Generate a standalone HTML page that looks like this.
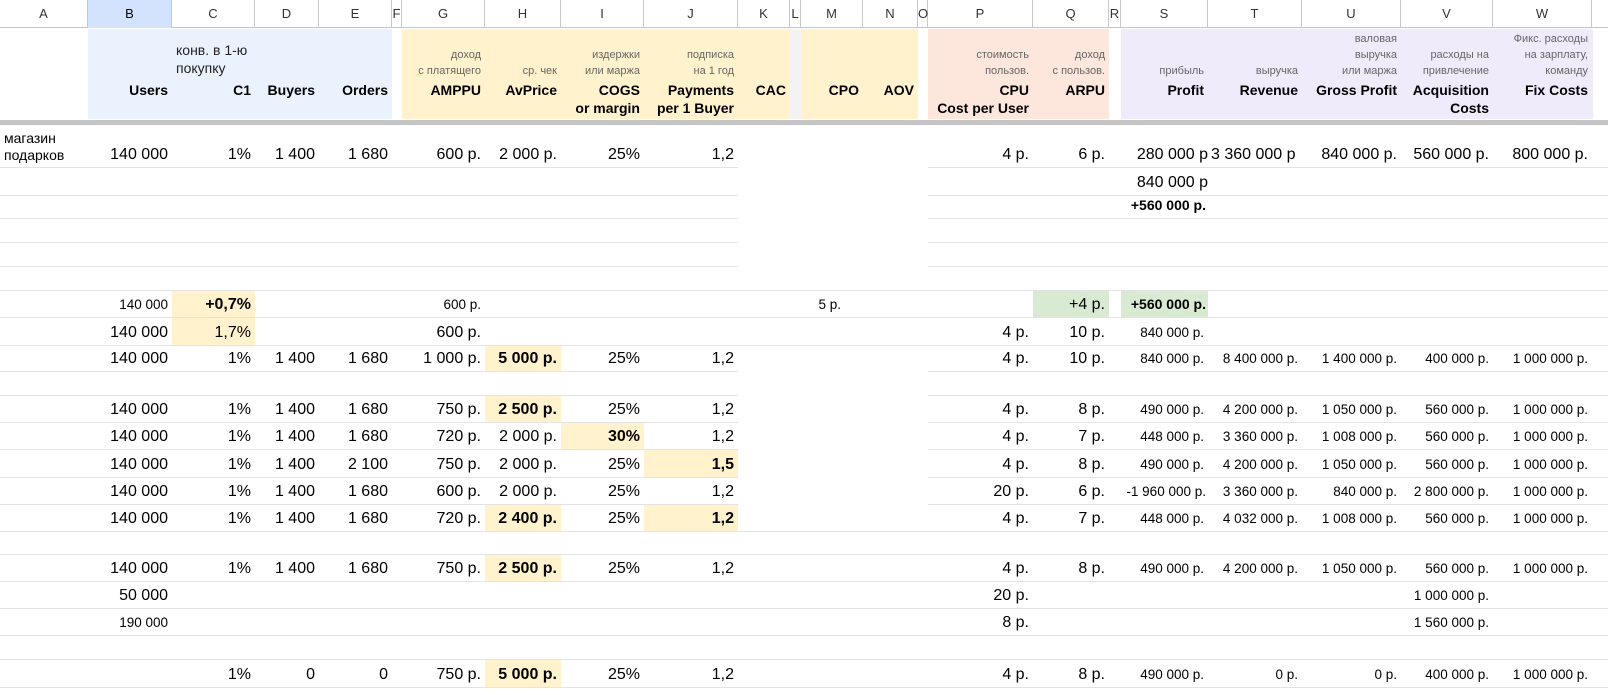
<!DOCTYPE html>
<html><head><meta charset="utf-8"><style>
*{margin:0;padding:0;box-sizing:border-box}
body{width:1608px;height:695px;overflow:hidden;background:#fff;font-family:"Liberation Sans","DejaVu Sans",sans-serif;color:#000;position:relative}
#hdr{position:absolute;left:0;top:0;height:28px;width:1608px;border-bottom:1px solid #c4c4c4;background:#fff}
#hdr div{position:absolute;top:0;height:28px;border-right:1px solid #c9c9c9;text-align:center;line-height:28px;font-size:13px;color:#333}
#band{position:absolute;left:0;top:28px;height:92px;width:1608px}
#band div.c{position:absolute;top:1px;height:90px}
#bar{position:absolute;left:0;top:120px;height:5px;width:1608px;background:#c4c4c4}
.h{position:absolute;text-align:right;font-size:11px;color:#666;white-space:nowrap;line-height:16px}
.hb{position:absolute;text-align:right;font-size:14px;font-weight:bold;white-space:nowrap;line-height:18px}
table{position:absolute;left:0;top:125px;border-collapse:collapse;table-layout:fixed;width:1608px}
td{border-bottom:1px solid #e3e3e3;padding:0 4px 3px 2px;text-align:right;vertical-align:bottom;font-size:16px;white-space:nowrap;overflow:hidden;line-height:19px}
td.n{border-bottom:none}
.b{font-weight:bold}
.s{font-size:13.5px}
.y{background:#fff2cc}
.g{background:#d9ead3}
</style></head><body>
<div id="hdr">
<div style="left:0;width:88px">A</div>
<div style="left:88px;width:84px;background:#d3e3fd;color:#000">B</div>
<div style="left:172px;width:83px">C</div>
<div style="left:255px;width:64px">D</div>
<div style="left:319px;width:73px">E</div>
<div style="left:392px;width:10px">F</div>
<div style="left:402px;width:83px">G</div>
<div style="left:485px;width:76px">H</div>
<div style="left:561px;width:83px">I</div>
<div style="left:644px;width:94px">J</div>
<div style="left:738px;width:52px">K</div>
<div style="left:790px;width:11px">L</div>
<div style="left:801px;width:62px">M</div>
<div style="left:863px;width:55px">N</div>
<div style="left:918px;width:10px">O</div>
<div style="left:928px;width:105px">P</div>
<div style="left:1033px;width:76px">Q</div>
<div style="left:1109px;width:12px">R</div>
<div style="left:1121px;width:87px">S</div>
<div style="left:1208px;width:94px">T</div>
<div style="left:1302px;width:99px">U</div>
<div style="left:1401px;width:92px">V</div>
<div style="left:1493px;width:99px">W</div>
</div>
<div id="band">
<div class="c" style="left:88px;width:304px;background:#eaf3fd"></div>
<div class="c" style="left:402px;width:388px;background:#fff2cc"></div>
<div class="c" style="left:790px;width:11px;background:#f3f3f3"></div>
<div class="c" style="left:801px;width:117px;background:#fff2cc"></div>
<div class="c" style="left:928px;width:181px;background:#fde6dc"></div>
<div class="c" style="left:1121px;width:472px;background:#efebfb"></div>
</div>
<div style="position:absolute;top:0;left:0;width:1608px;height:125px">
<div class="hb" style="left:88px;width:80px;top:81px">Users</div>
<div style="position:absolute;left:176px;top:41px;font-size:14px;line-height:18px;color:#222">конв. в 1-ю<br>покупку</div>
<div class="hb" style="left:172px;width:79px;top:81px">C1</div>
<div class="hb" style="left:255px;width:60px;top:81px">Buyers</div>
<div class="hb" style="left:319px;width:69px;top:81px">Orders</div>
<div class="h" style="left:402px;width:79px;top:47px">доход<br>с платящего</div>
<div class="hb" style="left:402px;width:79px;top:81px">AMPPU</div>
<div class="h" style="left:485px;width:72px;top:63px">ср. чек</div>
<div class="hb" style="left:485px;width:72px;top:81px">AvPrice</div>
<div class="h" style="left:561px;width:79px;top:47px">издержки<br>или маржа</div>
<div class="hb" style="left:561px;width:79px;top:81px">COGS<br>or margin</div>
<div class="h" style="left:644px;width:90px;top:47px">подписка<br>на 1 год</div>
<div class="hb" style="left:644px;width:90px;top:81px">Payments<br>per 1 Buyer</div>
<div class="hb" style="left:738px;width:48px;top:81px">CAC</div>
<div class="hb" style="left:801px;width:58px;top:81px">CPO</div>
<div class="hb" style="left:863px;width:51px;top:81px">AOV</div>
<div class="h" style="left:928px;width:101px;top:47px">стоимость<br>пользов.</div>
<div class="hb" style="left:928px;width:101px;top:81px">CPU<br>Cost per User</div>
<div class="h" style="left:1033px;width:72px;top:47px">доход<br>с пользов.</div>
<div class="hb" style="left:1033px;width:72px;top:81px">ARPU</div>
<div class="h" style="left:1121px;width:83px;top:63px">прибыль</div>
<div class="hb" style="left:1121px;width:83px;top:81px">Profit</div>
<div class="h" style="left:1208px;width:90px;top:63px">выручка</div>
<div class="hb" style="left:1208px;width:90px;top:81px">Revenue</div>
<div class="h" style="left:1302px;width:95px;top:31px">валовая<br>выручка<br>или маржа</div>
<div class="hb" style="left:1302px;width:95px;top:81px">Gross Profit</div>
<div class="h" style="left:1401px;width:88px;top:47px">расходы на<br>привлечение</div>
<div class="hb" style="left:1401px;width:88px;top:81px">Acquisition<br>Costs</div>
<div class="h" style="left:1493px;width:95px;top:31px">Фикс. расходы<br>на зарплату,<br>команду</div>
<div class="hb" style="left:1493px;width:95px;top:81px">Fix Costs</div>
</div>
<div id="bar"></div>
<table>
<colgroup><col style="width:88px"><col style="width:84px"><col style="width:83px"><col style="width:64px"><col style="width:73px"><col style="width:10px"><col style="width:83px"><col style="width:76px"><col style="width:83px"><col style="width:94px"><col style="width:52px"><col style="width:11px"><col style="width:62px"><col style="width:55px"><col style="width:10px"><col style="width:105px"><col style="width:76px"><col style="width:12px"><col style="width:87px"><col style="width:94px"><col style="width:99px"><col style="width:92px"><col style="width:99px"><col style="width:16px"></colgroup>
<tr style="height:42px"><td style="text-align:left;font-size:14px;line-height:17px;padding-left:4px">магазин<br>подарков</td><td>140 000</td><td>1%</td><td>1 400</td><td>1 680</td><td></td><td>600 р.</td><td>2 000 р.</td><td>25%</td><td>1,2</td><td class="n"></td><td class="n"></td><td class="n"></td><td class="n"></td><td class="n"></td><td>4 р.</td><td>6 р.</td><td></td><td style="padding-right:0;overflow:visible">280 000 р</td><td style="text-align:left;padding-left:3px">3 360 000 р</td><td>840 000 р.</td><td>560 000 р.</td><td>800 000 р.</td><td></td></tr>
<tr style="height:28px"><td></td><td></td><td></td><td></td><td></td><td></td><td></td><td></td><td></td><td></td><td class="n"></td><td class="n"></td><td class="n"></td><td class="n"></td><td class="n"></td><td></td><td></td><td></td><td style="padding-right:0;overflow:visible">840 000 р</td><td></td><td></td><td></td><td></td><td></td></tr>
<tr style="height:23px"><td></td><td></td><td></td><td></td><td></td><td></td><td></td><td></td><td></td><td></td><td class="n"></td><td class="n"></td><td class="n"></td><td class="n"></td><td class="n"></td><td></td><td></td><td></td><td class="b" style="font-size:14px;padding-right:2px;overflow:visible">+560 000 р.</td><td></td><td></td><td></td><td></td><td></td></tr>
<tr style="height:24px"><td></td><td></td><td></td><td></td><td></td><td></td><td></td><td></td><td></td><td></td><td class="n"></td><td class="n"></td><td class="n"></td><td class="n"></td><td class="n"></td><td></td><td></td><td></td><td></td><td></td><td></td><td></td><td></td><td></td></tr>
<tr style="height:24px"><td></td><td></td><td></td><td></td><td></td><td></td><td></td><td></td><td></td><td></td><td class="n"></td><td class="n"></td><td class="n"></td><td class="n"></td><td class="n"></td><td></td><td></td><td></td><td></td><td></td><td></td><td></td><td></td><td></td></tr>
<tr style="height:24px"><td></td><td></td><td></td><td></td><td></td><td></td><td></td><td></td><td></td><td></td><td></td><td></td><td></td><td></td><td></td><td></td><td></td><td></td><td></td><td></td><td></td><td></td><td></td><td></td></tr>
<tr style="height:27px"><td></td><td class="s">140 000</td><td class="b y">+0,7%</td><td></td><td></td><td></td><td class="s">600 р.</td><td></td><td></td><td></td><td></td><td></td><td class="s" style="padding-right:22px">5 р.</td><td></td><td></td><td></td><td class="g">+4 р.</td><td></td><td class="b g" style="font-size:14px;padding-right:2px">+560 000 р.</td><td></td><td></td><td></td><td></td><td></td></tr>
<tr style="height:28px"><td></td><td>140 000</td><td class="y">1,7%</td><td></td><td></td><td></td><td>600 р.</td><td></td><td></td><td></td><td></td><td></td><td></td><td></td><td></td><td>4 р.</td><td>10 р.</td><td></td><td class="s">840 000 р.</td><td></td><td></td><td></td><td></td><td></td></tr>
<tr style="height:26px"><td></td><td>140 000</td><td>1%</td><td>1 400</td><td>1 680</td><td></td><td>1 000 р.</td><td class="b y">5 000 р.</td><td>25%</td><td>1,2</td><td class="n"></td><td class="n"></td><td class="n"></td><td class="n"></td><td class="n"></td><td>4 р.</td><td>10 р.</td><td></td><td class="s">840 000 р.</td><td class="s">8 400 000 р.</td><td class="s">1 400 000 р.</td><td class="s">400 000 р.</td><td class="s">1 000 000 р.</td><td></td></tr>
<tr style="height:24px"><td></td><td></td><td></td><td></td><td></td><td></td><td></td><td></td><td></td><td></td><td class="n"></td><td class="n"></td><td class="n"></td><td class="n"></td><td class="n"></td><td></td><td></td><td></td><td></td><td></td><td></td><td></td><td></td><td></td></tr>
<tr style="height:27px"><td></td><td>140 000</td><td>1%</td><td>1 400</td><td>1 680</td><td></td><td>750 р.</td><td class="b y">2 500 р.</td><td>25%</td><td>1,2</td><td class="n"></td><td class="n"></td><td class="n"></td><td class="n"></td><td class="n"></td><td>4 р.</td><td>8 р.</td><td></td><td class="s">490 000 р.</td><td class="s">4 200 000 р.</td><td class="s">1 050 000 р.</td><td class="s">560 000 р.</td><td class="s">1 000 000 р.</td><td></td></tr>
<tr style="height:27px"><td></td><td>140 000</td><td>1%</td><td>1 400</td><td>1 680</td><td></td><td>720 р.</td><td>2 000 р.</td><td class="b y">30%</td><td>1,2</td><td class="n"></td><td class="n"></td><td class="n"></td><td class="n"></td><td class="n"></td><td>4 р.</td><td>7 р.</td><td></td><td class="s">448 000 р.</td><td class="s">3 360 000 р.</td><td class="s">1 008 000 р.</td><td class="s">560 000 р.</td><td class="s">1 000 000 р.</td><td></td></tr>
<tr style="height:28px"><td></td><td>140 000</td><td>1%</td><td>1 400</td><td>2 100</td><td></td><td>750 р.</td><td>2 000 р.</td><td>25%</td><td class="b y">1,5</td><td class="n"></td><td class="n"></td><td class="n"></td><td class="n"></td><td class="n"></td><td>4 р.</td><td>8 р.</td><td></td><td class="s">490 000 р.</td><td class="s">4 200 000 р.</td><td class="s">1 050 000 р.</td><td class="s">560 000 р.</td><td class="s">1 000 000 р.</td><td></td></tr>
<tr style="height:27px"><td></td><td>140 000</td><td>1%</td><td>1 400</td><td>1 680</td><td></td><td>600 р.</td><td>2 000 р.</td><td>25%</td><td>1,2</td><td class="n"></td><td class="n"></td><td class="n"></td><td class="n"></td><td class="n"></td><td>20 р.</td><td>6 р.</td><td></td><td class="s" style="overflow:visible;padding-right:2px">-1 960 000 р.</td><td class="s">3 360 000 р.</td><td class="s">840 000 р.</td><td class="s">2 800 000 р.</td><td class="s">1 000 000 р.</td><td></td></tr>
<tr style="height:27px"><td></td><td>140 000</td><td>1%</td><td>1 400</td><td>1 680</td><td></td><td>720 р.</td><td class="b y">2 400 р.</td><td>25%</td><td class="b y">1,2</td><td></td><td></td><td></td><td></td><td></td><td>4 р.</td><td>7 р.</td><td></td><td class="s">448 000 р.</td><td class="s">4 032 000 р.</td><td class="s">1 008 000 р.</td><td class="s">560 000 р.</td><td class="s">1 000 000 р.</td><td></td></tr>
<tr style="height:23px"><td></td><td></td><td></td><td></td><td></td><td></td><td></td><td></td><td></td><td></td><td></td><td></td><td></td><td></td><td></td><td></td><td></td><td></td><td></td><td></td><td></td><td></td><td></td><td></td></tr>
<tr style="height:27px"><td></td><td>140 000</td><td>1%</td><td>1 400</td><td>1 680</td><td></td><td>750 р.</td><td class="b y">2 500 р.</td><td>25%</td><td>1,2</td><td></td><td></td><td></td><td></td><td></td><td>4 р.</td><td>8 р.</td><td></td><td class="s">490 000 р.</td><td class="s">4 200 000 р.</td><td class="s">1 050 000 р.</td><td class="s">560 000 р.</td><td class="s">1 000 000 р.</td><td></td></tr>
<tr style="height:27px"><td></td><td>50 000</td><td></td><td></td><td></td><td></td><td></td><td></td><td></td><td></td><td></td><td></td><td></td><td></td><td></td><td>20 р.</td><td></td><td></td><td></td><td></td><td></td><td class="s">1 000 000 р.</td><td></td><td></td></tr>
<tr style="height:27px"><td></td><td class="s">190 000</td><td></td><td></td><td></td><td></td><td></td><td></td><td></td><td></td><td></td><td></td><td></td><td></td><td></td><td>8 р.</td><td></td><td></td><td></td><td></td><td></td><td class="s">1 560 000 р.</td><td></td><td></td></tr>
<tr style="height:24px"><td></td><td></td><td></td><td></td><td></td><td></td><td></td><td></td><td></td><td></td><td></td><td></td><td></td><td></td><td></td><td></td><td></td><td></td><td></td><td></td><td></td><td></td><td></td><td></td></tr>
<tr style="height:28px"><td></td><td></td><td>1%</td><td>0</td><td>0</td><td></td><td>750 р.</td><td class="b y">5 000 р.</td><td>25%</td><td>1,2</td><td></td><td></td><td></td><td></td><td></td><td>4 р.</td><td>8 р.</td><td></td><td class="s">490 000 р.</td><td class="s">0 р.</td><td class="s">0 р.</td><td class="s">400 000 р.</td><td class="s">1 000 000 р.</td><td></td></tr>
</table>
</body></html>
